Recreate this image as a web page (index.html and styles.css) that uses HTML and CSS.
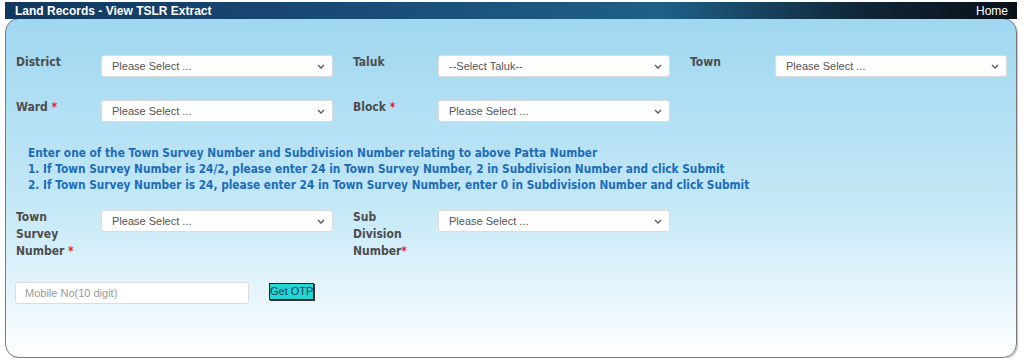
FILE: index.html
```html
<!DOCTYPE html>
<html lang="en">
<head>
  <meta charset="UTF-8" />
  <title>Land Records - View TSLR Extract</title>
  <link rel="stylesheet" href="styles.css">
</head>
<body>
  <div class="page">
    <div class="titlebar">
      <span class="title">Land Records - View TSLR Extract</span>
      <a href="#" class="home">Home</a>
    </div>
    <div class="panel">
      <div class="row">
        <div class="field">
          <label>District</label>
          <select><option>Please Select ...</option></select>
        </div>
        <div class="field">
          <label>Taluk</label>
          <select><option>--Select Taluk--</option></select>
        </div>
        <div class="field">
          <label>Town</label>
          <select><option>Please Select ...</option></select>
        </div>
      </div>
      <div class="row">
        <div class="field">
          <label>Ward <span class="req">*</span></label>
          <select><option>Please Select ...</option></select>
        </div>
        <div class="field">
          <label>Block <span class="req">*</span></label>
          <select><option>Please Select ...</option></select>
        </div>
      </div>
      <div class="note">
        Enter one of the Town Survey Number and Subdivision Number relating to above Patta Number<br>
        1. If Town Survey Number is 24/2, please enter 24 in Town Survey Number, 2 in Subdivision Number and click Submit<br>
        2. If Town Survey Number is 24, please enter 24 in Town Survey Number, enter 0 in Subdivision Number and click Submit
      </div>
      <div class="row">
        <div class="field">
          <label>Town Survey Number <span class="req">*</span></label>
          <select><option>Please Select ...</option></select>
        </div>
        <div class="field">
          <label>Sub Division Number<span class="req">*</span></label>
          <select><option>Please Select ...</option></select>
        </div>
      </div>
      <div class="otp-row">
        <input type="text" class="mobile" placeholder="Mobile No(10 digit)" />
        <button type="button" class="otp-btn">Get OTP</button>
      </div>
    </div>
  </div>
</body>
</html>
```

FILE: styles.css
```css
body {
  margin: 0;
  background: #fff;
  font-family: "Liberation Sans", Arial, sans-serif;
}
.page {
  margin: 2px 7px 0 5px;
}
.titlebar {
  height: 17px;
  display: flex;
  justify-content: space-between;
  align-items: center;
  padding: 0 9px 0 10px;
  background: linear-gradient(to right, #11375f 0%, #1a4f7a 40%, #1f5f86 65%, #0f2535 85%, #0a1018 100%);
  color: #fff;
  font-size: 12px;
  position: relative;
  z-index: 1;
}
.title {
  font-weight: bold;
}
.home {
  color: #fff;
  text-decoration: none;
}
.panel {
  height: 340px;
  box-sizing: border-box;
  margin-top: -1px;
  border: 1px solid #7a7a7a;
  border-radius: 14px;
  box-shadow: 1px 1px 1px rgba(0, 0, 0, 0.25);
  background: linear-gradient(to bottom, #9fd7f0 0%, #c4e8f7 55%, #ffffff 100%);
  padding: 36px 10px 0 10px;
}
.row {
  display: flex;
  gap: 20px;
  margin-bottom: 23px;
}
.field {
  display: flex;
  width: 317px;
}
.field label {
  width: 85px;
  flex-shrink: 0;
  padding-right: 10px;
  box-sizing: border-box;
  margin-top: -1px;
  font-family: "DejaVu Sans Condensed", "DejaVu Sans", sans-serif;
  font-weight: bold;
  font-size: 12px;
  line-height: 17px;
  color: #4d4d4d;
}
.req {
  color: #e0242b;
}
select {
  appearance: none;
  width: 232px;
  height: 22px;
  border: 1px solid #dcdcdc;
  border-radius: 3px;
  background: #fff url("data:image/svg+xml,%3Csvg xmlns='http://www.w3.org/2000/svg' width='8' height='5' viewBox='0 0 8 5'%3E%3Cpath d='M1 1l3 3 3-3' fill='none' stroke='%23555' stroke-width='1.3'/%3E%3C/svg%3E") no-repeat right 7px center;
  padding-left: 10px;
  font-family: "Liberation Sans", Arial, sans-serif;
  font-size: 11px;
  color: #555;
}
.note {
  margin: 1px 0 17px 12px;
  font-family: "DejaVu Sans Condensed", "DejaVu Sans", sans-serif;
  font-weight: bold;
  font-size: 11.75px;
  line-height: 16px;
  color: #1c6cb8;
}
.otp-row {
  display: flex;
  align-items: flex-start;
  gap: 20px;
  margin-top: -1px;
  margin-left: -1px;
}
.mobile {
  width: 234px;
  height: 22px;
  box-sizing: border-box;
  border: 1px solid #dcdcdc;
  border-radius: 3px;
  padding-left: 9px;
  font-family: "Liberation Sans", Arial, sans-serif;
  font-size: 11px;
}
.mobile::placeholder {
  color: #999;
}
.otp-btn {
  margin-top: 1px;
  height: 17px;
  padding: 0;
  white-space: nowrap;
  background: #22d6d6;
  border: 1px solid #123;
  box-shadow: 1px 1px 0 #333;
  font-family: "Liberation Sans", Arial, sans-serif;
  font-size: 11px;
  line-height: 15px;
  color: #1d3a4a;
}
```
